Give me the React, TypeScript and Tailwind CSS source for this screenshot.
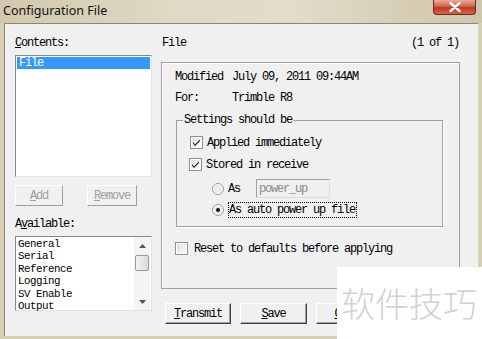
import React from "react";

const font = "font-['SimSun','Liberation_Mono',monospace] text-[12px] tracking-[-1.2px]";
const mono = `${font} leading-[12px]`;
const listFont = "font-['SimSun','Liberation_Mono',monospace] text-[10.8px] tracking-[-0.48px]";

function Check({ checked }: { checked?: boolean }) {
    return (
        <svg width="13" height="13" viewBox="0 0 13 13" className="shrink-0">
            <defs>
                <linearGradient id="cbg" x1="0" y1="0" x2="1" y2="1">
                    <stop offset="0" stopColor="#dcdcdc" />
                    <stop offset="1" stopColor="#ffffff" />
                </linearGradient>
            </defs>
            <rect x="0.5" y="0.5" width="12" height="12" fill="#fff" stroke="#8e8f8f" />
            <rect x="2" y="2" width="9" height="9" fill="url(#cbg)" />
            {checked && <path d="M3 6 L5 8.5 L10 3.5 L10 5 L5 10 L3 7.5 Z" fill="#151515" />}
        </svg>
    );
}

function Radio({ checked }: { checked?: boolean }) {
    return (
        <svg width="12" height="12" viewBox="0 0 12 12" className="shrink-0">
            <circle cx="6" cy="6" r="5.5" fill="#fff" stroke="#9a9a9a" />
            <circle cx="6" cy="6" r="4" fill="#ececec" />
            {checked && <circle cx="6" cy="6" r="2" fill="#111" />}
        </svg>
    );
}

function Btn({ children, width, disabled }: { children: React.ReactNode; width: string; disabled?: boolean }) {
    return (
        <div
            className={`${width} h-[21px] flex items-center justify-center bg-[#f0f0f0] border border-t-white border-l-white ${disabled ? "border-b-[#a0a0a0] border-r-[#a0a0a0] text-[#a0a0a0]" : "border-b-[#404040] border-r-[#404040] shadow-[inset_-1px_-1px_0_#a0a0a0] text-black"} ${mono}`}
        >
            {children}
        </div>
    );
}

export default function App() {
    const available = ["General", "Serial", "Reference", "Logging", "SV Enable", "Output"];

    return (
        <div className="relative w-[482px] h-[339px] overflow-hidden bg-[#d8cfb7] flex flex-col">
            {/* title bar */}
            <div className="h-[23px] flex items-start justify-between bg-[linear-gradient(90deg,#d2c8ad_0%,#dfd8c3_35%,#e3dccb_60%,#d6cdb4_85%,#cfc6ae_100%)]">
                <div className="pl-[3px] pt-[3px] text-[12.5px] leading-[15px] text-[#111] font-['Noto_Sans',sans-serif]">
                    Configuration File
                </div>
                <div className="mr-[6px] w-[43px] h-[15px] rounded-b-[4px] border border-t-0 border-[#6e2a1e] bg-[linear-gradient(180deg,#e9a99a_0%,#d4614a_45%,#c0391f_55%,#d2664c_100%)] flex items-center justify-center">
                    <svg width="12" height="10" viewBox="0 0 12 10">
                        <path d="M1.5 1 L10.5 9 M10.5 1 L1.5 9" stroke="#fff" strokeWidth="2.4" strokeLinecap="round" />
                    </svg>
                </div>
            </div>

            <div className="flex h-[313px]">
                <div className="w-[4px]" />
                {/* client */}
                <div className="w-[474px] h-[313px] bg-[#f0f0f0] border-l border-t border-[#8a8577] flex pl-[10px] pt-[13px] text-black">
                    {/* left column */}
                    <div className="w-[137px] flex flex-col">
                        <div className={mono}>
                            <span className="underline">C</span>ontents:
                        </div>
                        <div className="mt-[6px] h-[122px] bg-white border border-t-[#828790] border-l-[#828790] border-b-[#e3e3e3] border-r-[#e3e3e3] p-[1px]">
                            <div className={`h-[12px] bg-[#3399ff] text-white pl-[2px] ${mono}`}>File</div>
                        </div>
                        <div className="mt-[8px] flex gap-[24px]">
                            <Btn width="w-[48px]" disabled>
                                <span className="underline">A</span>dd
                            </Btn>
                            <Btn width="w-[50px]" disabled>
                                <span className="underline">R</span>emove
                            </Btn>
                        </div>
                        <div className={`mt-[12px] ${mono}`}>
                            A<span className="underline">v</span>ailable:
                        </div>
                        <div className="mt-[6px] h-[75px] bg-white border border-t-[#828790] border-l-[#828790] border-b-[#e3e3e3] border-r-[#e3e3e3] flex">
                            <div className="flex-1 pl-[2px] pt-[1px] flex flex-col">
                                {available.map((a) => (
                                    <div key={a} className={`h-[12.4px] leading-[12.4px] ${listFont}`}>
                                        {a}
                                    </div>
                                ))}
                            </div>
                            <div className="w-[16px] mr-[1px] bg-[#f4f4f4] flex flex-col items-center">
                                <div className="h-[18px] flex items-center justify-center">
                                    <svg width="7" height="4" viewBox="0 0 7 4"><path d="M0 4 L3.5 0 L7 4 Z" fill="#555" /></svg>
                                </div>
                                <div className="w-[14px] h-[16px] rounded-[2px] border border-[#9a9a9a] bg-[linear-gradient(90deg,#f2f2f2,#dcdcdc)]" />
                                <div className="flex-1" />
                                <div className="h-[17px] flex items-center justify-center">
                                    <svg width="7" height="4" viewBox="0 0 7 4"><path d="M0 0 L7 0 L3.5 4 Z" fill="#555" /></svg>
                                </div>
                            </div>
                        </div>
                    </div>

                    {/* right column */}
                    <div className="ml-[9px] w-[299px] flex flex-col">
                        <div className={`flex justify-between pl-[1px] pr-[1px] ${mono}`}>
                            <span>File</span>
                            <span>(1 of 1)</span>
                        </div>
                        <div className="mt-[13px] h-[227px] border border-[#a0a0a0] shadow-[inset_1px_1px_0_#fff] flex flex-col">
                            <div className={`mt-[8px] ml-[13px] flex ${mono}`}>
                                <span className="w-[57px]">Modified</span>
                                <span>July 09, 2011 09:44AM</span>
                            </div>
                            <div className={`mt-[9px] ml-[13px] flex ${mono}`}>
                                <span className="w-[57px]">For:</span>
                                <span>Trimble R8</span>
                            </div>
                            <fieldset className="mt-[10px] ml-[14px] w-[267px] h-[113px] border border-[#a0a0a0] shadow-[1px_1px_0_#fff]">
                                <legend className={`ml-[6px] px-[1px] ${mono}`}>Settings should be</legend>
                                <div className={`mt-[10px] ml-[13px] flex items-center gap-[4px] ${mono}`}>
                                    <Check checked />
                                    <span>Applied immediately</span>
                                </div>
                                <div className={`mt-[9px] ml-[12px] flex items-center gap-[4px] ${mono}`}>
                                    <Check checked />
                                    <span>Stored in receive</span>
                                </div>
                                <div className={`mt-[8px] ml-[35px] flex items-center ${mono}`}>
                                    <Radio />
                                    <span className="ml-[4px] w-[28px]">As</span>
                                    <div className="w-[74px] h-[19px] border border-t-[#a0a0a0] border-l-[#a0a0a0] border-b-[#dcdcdc] border-r-[#dcdcdc] bg-[#f0f0f0] text-[#8a8a8a] flex items-center pl-[2px]">
                                        power_up
                                    </div>
                                </div>
                                <div className={`mt-[4px] ml-[35px] flex items-center ${mono}`}>
                                    <Radio checked />
                                    <span className="ml-[4px] h-[16px] w-[129px] border border-dotted border-black flex items-center">
                                        As auto power up file
                                    </span>
                                </div>
                            </fieldset>
                            <div className={`mt-[15px] ml-[13px] flex items-center gap-[6px] ${mono}`}>
                                <Check />
                                <span>Reset to defaults before applying</span>
                            </div>
                        </div>
                        <div className="mt-[14px] ml-[4px] flex gap-[9px]">
                            <Btn width="w-[66px]">
                                <span className="underline">T</span>ransmit
                            </Btn>
                            <Btn width="w-[67px]">
                                <span className="underline">S</span>ave
                            </Btn>
                            <Btn width="w-[67px]">
                                <span className="underline">C</span>lose
                            </Btn>
                        </div>
                    </div>
                </div>
                <div className="w-[4px]" />
            </div>

            {/* watermark */}
            <div className="absolute left-[337px] top-[267px] w-[145px] h-[72px] bg-white flex items-center pl-[4px]">
                <span className="text-[34px] leading-[36px] text-[#d2d2d2] font-['Noto_Sans_CJK_SC',sans-serif] font-light">
                    软件技巧
                </span>
            </div>
        </div>
    );
}
